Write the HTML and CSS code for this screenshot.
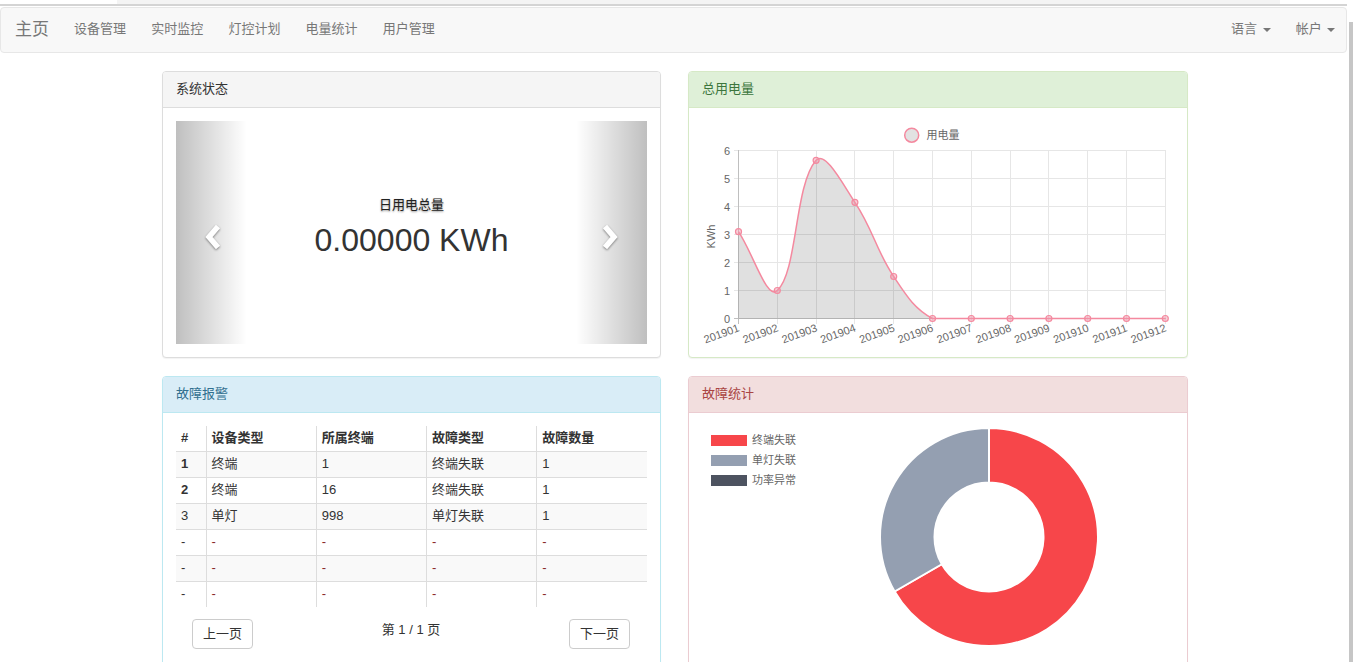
FILE: index.html
```html
<!DOCTYPE html>
<html lang="zh-CN">
<head>
<meta charset="utf-8">
<title>主页</title>
<link rel="stylesheet" href="styles.css">
</head>
<body>
<div class="page">
  <div class="top-strip"><div class="top-strip-band"></div></div>
  <div class="top-line"></div>
  <nav class="navbar">
    <a class="brand">主页</a>
    <ul class="nav">
      <li><a>设备管理</a></li>
      <li><a>实时监控</a></li>
      <li><a>灯控计划</a></li>
      <li><a>电量统计</a></li>
      <li><a>用户管理</a></li>
    </ul>
    <ul class="nav nav-right">
      <li><a>语言 <span class="caret"></span></a></li>
      <li><a>帐户 <span class="caret"></span></a></li>
    </ul>
  </nav>

  <main class="dashboard">
    <section class="panel panel-default">
      <div class="panel-heading">系统状态</div>
      <div class="panel-body">
        <div class="carousel">
          <a class="carousel-control left">
            <svg class="chevron" width="18" height="26" viewBox="0 0 18 26"><path d="M14,2.5 L5,13 L14,23.5"/></svg>
          </a>
          <div class="carousel-item">
            <div class="caption-title">日用电总量</div>
            <div class="caption-value">0.00000 KWh</div>
          </div>
          <a class="carousel-control right">
            <svg class="chevron" width="18" height="26" viewBox="0 0 18 26"><path d="M4,2.5 L13,13 L4,23.5"/></svg>
          </a>
        </div>
      </div>
    </section>

    <section class="panel panel-success">
      <div class="panel-heading">总用电量</div>
      <div class="panel-body chart-body">
        <svg class="line-chart" width="498" height="249" viewBox="689 108 498 249">
          <circle class="legend-dot" cx="911.7" cy="135.2" r="7"/>
          <text class="chart-text" x="926.5" y="139.2">用电量</text>

          <path class="grid" d="M734,150.5H1166 M734,178.5H1166 M734,206.5H1166 M734,234.5H1166 M734,262.5H1166 M734,290.5H1166 M777.5,150V324 M816.5,150V324 M854.5,150V324 M893.5,150V324 M932.5,150V324 M971.5,150V324 M1010.5,150V324 M1048.5,150V324 M1087.5,150V324 M1126.5,150V324 M1165.5,150V324"/>
          <path class="zero" d="M734,318.5H1166 M738.5,150V324"/>

          <text class="chart-text" x="730" y="322.5" text-anchor="end">0</text>
          <text class="chart-text" x="730" y="294.5" text-anchor="end">1</text>
          <text class="chart-text" x="730" y="266.5" text-anchor="end">2</text>
          <text class="chart-text" x="730" y="238.5" text-anchor="end">3</text>
          <text class="chart-text" x="730" y="210.5" text-anchor="end">4</text>
          <text class="chart-text" x="730" y="182.5" text-anchor="end">5</text>
          <text class="chart-text" x="730" y="154.5" text-anchor="end">6</text>
          <text class="chart-text" transform="translate(715,236.5) rotate(-90)" text-anchor="middle">KWh</text>

          <path class="area" d="M738.5,231.7 C754,255.2 766.7,300.3 777.3,290.5 C797.8,271.6 794.2,185.3 816.1,160.3 C825.3,150.5 842.3,183.3 854.9,202.3 C873.4,230.1 875.3,248.7 893.7,276.5 C906.3,295.5 914,308.4 932.5,318.5 L1165.3,318.5 L738.5,318.5 Z"/>
          <path class="line" d="M738.5,231.7 C754,255.2 766.7,300.3 777.3,290.5 C797.8,271.6 794.2,185.3 816.1,160.3 C825.3,150.5 842.3,183.3 854.9,202.3 C873.4,230.1 875.3,248.7 893.7,276.5 C906.3,295.5 914,308.4 932.5,318.5 L1165.3,318.5"/>

          <g class="points">
            <circle cx="738.5" cy="231.7" r="3"/>
            <circle cx="777.3" cy="290.5" r="3"/>
            <circle cx="816.1" cy="160.3" r="3"/>
            <circle cx="854.9" cy="202.3" r="3"/>
            <circle cx="893.7" cy="276.5" r="3"/>
            <circle cx="932.5" cy="318.5" r="3"/>
            <circle cx="971.3" cy="318.5" r="3"/>
            <circle cx="1010.1" cy="318.5" r="3"/>
            <circle cx="1048.9" cy="318.5" r="3"/>
            <circle cx="1087.7" cy="318.5" r="3"/>
            <circle cx="1126.5" cy="318.5" r="3"/>
            <circle cx="1165.3" cy="318.5" r="3"/>
          </g>

          <g class="chart-text" text-anchor="end">
            <text transform="translate(740,331) rotate(-20)">201901</text>
            <text transform="translate(779,331) rotate(-20)">201902</text>
            <text transform="translate(818,331) rotate(-20)">201903</text>
            <text transform="translate(856.5,331) rotate(-20)">201904</text>
            <text transform="translate(895.5,331) rotate(-20)">201905</text>
            <text transform="translate(934,331) rotate(-20)">201906</text>
            <text transform="translate(973,331) rotate(-20)">201907</text>
            <text transform="translate(1012,331) rotate(-20)">201908</text>
            <text transform="translate(1050.5,331) rotate(-20)">201909</text>
            <text transform="translate(1089.5,331) rotate(-20)">201910</text>
            <text transform="translate(1128,331) rotate(-20)">201911</text>
            <text transform="translate(1167,331) rotate(-20)">201912</text>
          </g>
        </svg>
      </div>
    </section>

    <section class="panel panel-info">
      <div class="panel-heading">故障报警</div>
      <div class="panel-body">
        <table class="fault-table">
          <colgroup>
            <col class="col-index"><col class="col-wide"><col class="col-wide"><col class="col-wide"><col class="col-wide">
          </colgroup>
          <thead>
            <tr><th>#</th><th>设备类型</th><th>所属终端</th><th>故障类型</th><th>故障数量</th></tr>
          </thead>
          <tbody>
            <tr><td class="strong">1</td><td>终端</td><td>1</td><td>终端失联</td><td>1</td></tr>
            <tr><td class="strong">2</td><td>终端</td><td>16</td><td>终端失联</td><td>1</td></tr>
            <tr><td>3</td><td>单灯</td><td>998</td><td>单灯失联</td><td>1</td></tr>
            <tr><td>-</td><td class="empty">-</td><td class="empty">-</td><td class="empty">-</td><td class="empty">-</td></tr>
            <tr><td>-</td><td class="empty">-</td><td class="empty">-</td><td class="empty">-</td><td class="empty">-</td></tr>
            <tr><td>-</td><td class="empty">-</td><td class="empty">-</td><td class="empty">-</td><td class="empty">-</td></tr>
          </tbody>
        </table>
        <div class="pager">
          <button class="btn">上一页</button>
          <span class="pager-info">第 1 / 1 页</span>
          <button class="btn">下一页</button>
        </div>
      </div>
    </section>

    <section class="panel panel-danger">
      <div class="panel-heading">故障统计</div>
      <div class="panel-body donut-body">
        <ul class="donut-legend">
          <li><span class="swatch swatch-red"></span>终端失联</li>
          <li><span class="swatch swatch-gray"></span>单灯失联</li>
          <li><span class="swatch swatch-dark"></span>功率异常</li>
        </ul>
        <svg class="donut" width="302" height="222" viewBox="872 426 302 222">
          <path class="slice-red" d="M989,428 A109,109 0 1 1 894.6,591.5 L941.8,564.25 A54.5,54.5 0 1 0 989,482.5 Z"/>
          <path class="slice-gray" d="M894.6,591.5 A109,109 0 0 1 989,428 L989,482.5 A54.5,54.5 0 0 0 941.8,564.25 Z"/>
        </svg>
      </div>
    </section>
  </main>
</div>
<div class="scrollbar"><div class="scrollbar-thumb"></div></div>
</body>
</html>
```

FILE: styles.css
```css
* {
  box-sizing: border-box;
}

html {
  overflow: hidden;
}

body {
  margin: 0;
  height: 662px;
  overflow: hidden;
  display: flex;
  font-family: "Liberation Sans", "Noto Sans CJK SC", sans-serif;
  font-size: 13px;
  line-height: 18px;
  color: #333;
  background: #fff;
}

.page {
  flex: none;
  width: 1347px;
}

.scrollbar {
  flex: 1;
  padding: 22px 0 0 2px;
}

.scrollbar-thumb {
  width: 4px;
  height: 100%;
  background: #c6c6c6;
}

.top-strip {
  height: 4px;
  padding-left: 117px;
}

.top-strip-band {
  width: 1163px;
  height: 4px;
  background: #f4f4f4;
}

.top-line {
  height: 2px;
  background: #d4d4d4;
  margin-bottom: 1px;
}

/* navbar */
.navbar {
  display: flex;
  align-items: center;
  height: 46px;
  border: 1px solid #e7e7e7;
  border-radius: 4px;
  background: #f8f8f8;
  margin-bottom: 18px;
}

.brand {
  padding: 0 12.4px 0 14px;
  font-size: 17px;
  line-height: 44px;
  color: #777;
}

.nav {
  display: flex;
  margin: 0;
  padding: 0;
  list-style: none;
}

.nav a {
  display: block;
  padding: 0 12.6px 2px;
  line-height: 42px;
  color: #777;
  font-size: 13px;
}

.nav-right {
  margin-left: auto;
  margin-right: -2px;
}

.caret {
  display: inline-block;
  width: 0;
  height: 0;
  margin-left: 2px;
  vertical-align: middle;
  border-top: 4px solid #777;
  border-left: 4px solid transparent;
  border-right: 4px solid transparent;
}

/* grid */
.dashboard {
  display: grid;
  grid-template-columns: 499px 500px;
  grid-template-rows: 287px 330px;
  column-gap: 27px;
  row-gap: 18px;
  padding-left: 162px;
}

.panel {
  border: 1px solid #ddd;
  border-radius: 4px;
  background: #fff;
  box-shadow: 0 1px 1px rgba(0, 0, 0, 0.05);
}

.panel-heading {
  height: 36px;
  padding: 0 13px 1px;
  line-height: 34px;
  border-bottom: 1px solid #ddd;
  border-radius: 3px 3px 0 0;
  font-size: 13px;
}

.panel-default .panel-heading {
  background: #f5f5f5;
  color: #333;
}

.panel-success {
  border-color: #d6e9c6;
}

.panel-success .panel-heading {
  background: #dff0d8;
  border-color: #d6e9c6;
  color: #3c763d;
}

.panel-info {
  border-color: #bce8f1;
}

.panel-info .panel-heading {
  background: #d9edf7;
  border-color: #bce8f1;
  color: #31708f;
}

.panel-danger {
  border-color: #ebccd1;
}

.panel-danger .panel-heading {
  background: #f2dede;
  border-color: #ebccd1;
  color: #a94442;
}

.panel-body {
  padding: 13px;
}

/* carousel */
.carousel {
  display: flex;
  height: 223px;
}

.carousel-control {
  flex: none;
  width: 15%;
  display: flex;
  align-items: center;
  justify-content: center;
  padding-top: 8px;
}

.carousel-control.left {
  padding-left: 4px;
  background: linear-gradient(to right, rgba(0, 0, 0, 0.25), rgba(0, 0, 0, 0));
}

.carousel-control.right {
  padding-right: 4px;
  background: linear-gradient(to left, rgba(0, 0, 0, 0.25), rgba(0, 0, 0, 0));
}

.chevron {
  display: block;
  filter: drop-shadow(0 1px 1px rgba(0, 0, 0, 0.45));
}

.chevron path {
  fill: none;
  stroke: #fff;
  stroke-width: 5.5;
  stroke-linejoin: miter;
  stroke-linecap: butt;
}

.carousel-item {
  flex: 1;
  padding-top: 75px;
  text-align: center;
}

.caption-title {
  font-size: 13px;
  line-height: 18px;
  color: #222;
  text-shadow: 0 1px 2px rgba(0, 0, 0, 0.45);
}

.caption-value {
  margin-top: 8px;
  font-size: 32px;
  line-height: 36px;
  color: #333;
}

/* line chart */
.chart-body {
  padding: 0;
}

.line-chart,
.donut {
  display: block;
}

.chart-text {
  font-family: "Liberation Sans", "Noto Sans CJK SC", sans-serif;
  font-size: 11px;
  fill: #666;
}

.legend-dot {
  fill: #e2e2e2;
  stroke: #f4899f;
  stroke-width: 1.5;
}

.grid {
  fill: none;
  stroke: #e6e6e6;
  stroke-width: 1;
}

.zero {
  fill: none;
  stroke: #bfbfbf;
  stroke-width: 1;
}

.area {
  fill: rgba(0, 0, 0, 0.12);
  stroke: none;
}

.line {
  fill: none;
  stroke: #f4899f;
  stroke-width: 1.5;
}

.points circle {
  fill: rgba(240, 150, 170, 0.45);
  stroke: #f4899f;
  stroke-width: 1.2;
}

/* table */
.fault-table {
  width: 100%;
  border-collapse: collapse;
  table-layout: fixed;
}

.col-index {
  width: 30px;
}

.col-wide {
  width: 110px;
}

.fault-table th,
.fault-table td {
  padding: 4px 5px 6px;
  line-height: 15px;
  text-align: left;
  border-left: 1px solid #ddd;
}

.fault-table th:first-child,
.fault-table td:first-child {
  border-left: none;
}

.fault-table th {
  font-weight: bold;
  border-bottom: 1px solid #ddd;
}

.fault-table td {
  border-top: 1px solid #ddd;
}

.fault-table tbody tr:nth-child(odd) {
  background: #f9f9f9;
}

.fault-table td.strong {
  font-weight: bold;
}

.fault-table td.empty {
  color: #8a2a2a;
}

.pager {
  display: flex;
  justify-content: space-between;
  align-items: flex-start;
  margin-top: 12px;
  padding: 0 17px 0 16px;
}

.btn {
  width: 61px;
  height: 30px;
  padding: 0;
  border: 1px solid #ccc;
  border-radius: 4px;
  background: #fff;
  font-family: inherit;
  font-size: 13px;
  line-height: 28px;
  color: #333;
}

.pager-info {
  line-height: 22px;
}

/* donut */
.donut-body {
  display: flex;
}

.donut-legend {
  flex: none;
  width: 170px;
  margin: 0;
  padding: 4px 0 0 9px;
  list-style: none;
}

.donut-legend li {
  display: flex;
  align-items: center;
  height: 20px;
  font-size: 11px;
  color: #666;
}

.swatch {
  width: 36px;
  height: 11px;
  margin-right: 5px;
}

.swatch-red {
  background: #f7464a;
}

.swatch-gray {
  background: #949fb1;
}

.swatch-dark {
  background: #4d5360;
}

.slice-red {
  fill: #f7464a;
  stroke: #fff;
  stroke-width: 2;
}

.slice-gray {
  fill: #949fb1;
  stroke: #fff;
  stroke-width: 2;
}
```
